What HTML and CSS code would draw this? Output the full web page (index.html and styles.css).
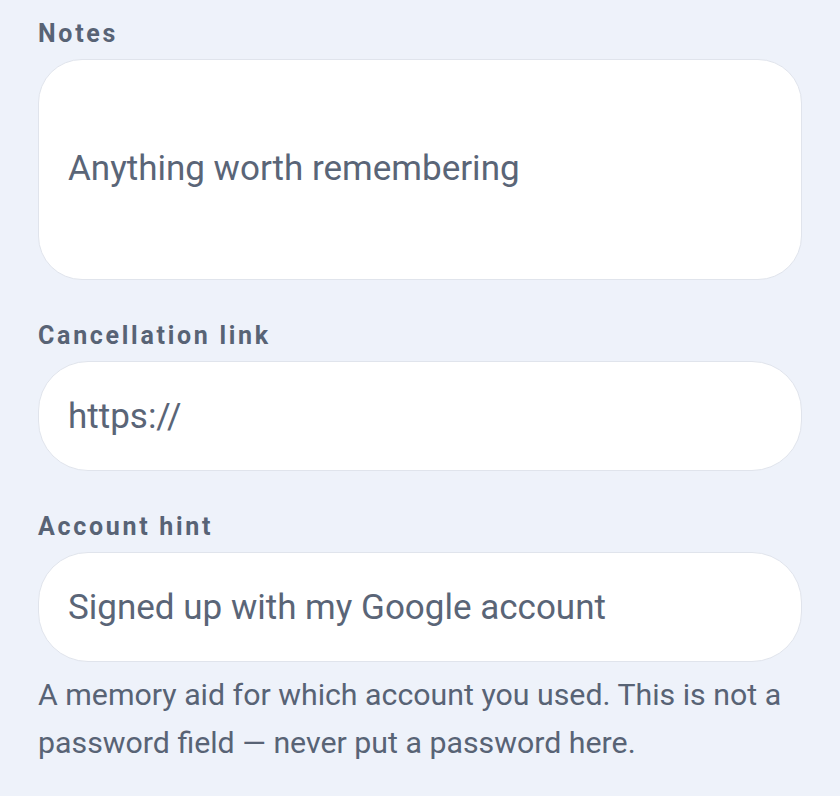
FILE: index.html
```html
<!DOCTYPE html>
<html lang="en">
<head>
    <meta charset="UTF-8">
    <meta name="viewport" content="width=device-width, initial-scale=1.0">
    <title>Subscription details</title>
    <link rel="stylesheet" href="styles.css">
</head>
<body>
    <div class="form">
        <div class="field">
            <label class="label" for="notes">Notes</label>
            <textarea id="notes" class="input notes" placeholder="Anything worth remembering"></textarea>
        </div>
        <div class="field">
            <label class="label" for="cancel-link">Cancellation link</label>
            <input type="text" id="cancel-link" class="input" placeholder="https://">
        </div>
        <div class="field">
            <label class="label" for="account-hint">Account hint</label>
            <input type="text" id="account-hint" class="input" placeholder="Signed up with my Google account">
            <p class="help">A memory aid for which account you used. This is not a password field — never put a password here.</p>
        </div>
    </div>
</body>
</html>
```

FILE: styles.css
```css
body {
    font-family: Roboto, "Noto Sans", Arial, sans-serif;
    background-color: #eef2fa;
    margin: 0;
    padding: 19px 38px;
    color: #586375;
}
.form {
    display: flex;
    flex-direction: column;
    gap: 41px;
}
.field {
    display: flex;
    flex-direction: column;
}
.label {
    font-size: 25px;
    font-weight: 700;
    letter-spacing: 2.7px;
    color: #586375;
    margin-bottom: 11px;
}
.input {
    box-sizing: border-box;
    width: 100%;
    height: 110px;
    padding: 0 29px;
    border: 1.5px solid #e0e4ec;
    border-radius: 50px;
    background-color: #ffffff;
    font-family: inherit;
    font-size: 35px;
    color: #586375;
    outline: none;
}
.input::placeholder {
    color: #5a6577;
    opacity: 1;
}
.notes {
    height: 221px;
    border-radius: 44px;
    padding: 88px 29px 0;
    resize: none;
    line-height: 42px;
}
.help {
    margin: 9px 0 0;
    font-size: 30.3px;
    line-height: 48px;
    color: #586375;
}
```
